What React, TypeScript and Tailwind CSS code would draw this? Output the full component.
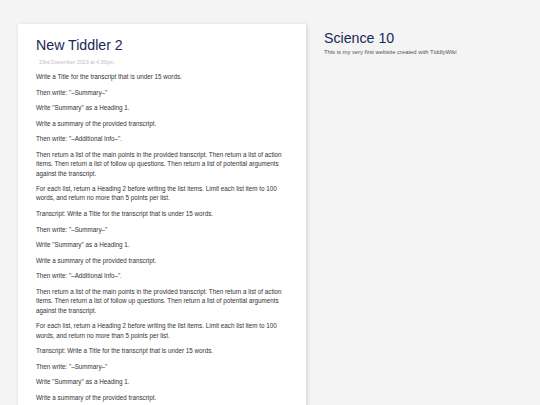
const paras: string[] = [
  "Write a Title for the transcript that is under 15 words.",
  "Then write: \"–Summary–\"",
  "Write \"Summary\" as a Heading 1.",
  "Write a summary of the provided transcript.",
  "Then write: \"–Additional Info–\".",
  "Then return a list of the main points in the provided transcript. Then return a list of action items. Then return a list of follow up questions. Then return a list of potential arguments against the transcript.",
  "For each list, return a Heading 2 before writing the list items. Limit each list item to 100 words, and return no more than 5 points per list.",
];

const body = [
  ...paras,
  "Transcript: " + paras[0],
  ...paras.slice(1),
  "Transcript: " + paras[0],
  ...paras.slice(1, 4),
];

export default function App() {
  return (
    <div className="flex h-[405px] w-[540px] overflow-hidden bg-[#f4f4f4] font-['Liberation_Sans',Arial,sans-serif]">
      <div className="ml-[18px] mt-[24px] w-[288px] shrink-0 self-start bg-white px-[18px] pt-[12px] pb-[18px] shadow-[1px_1px_4px_rgba(0,0,0,0.15)]">
        <h2 className="text-[14.2px] leading-[18px] text-[#182955]">New Tiddler 2</h2>
        <div className="mt-[4px] pl-[3px] text-[5.3px] leading-[8px] text-[#c0c0c0]">23rd December 2023 at 4:30pm</div>
        <div className="mt-[6px] text-[6.3px] leading-[9.3px] text-[#333333]">
          {body.map((p, i) => (
            <p key={i} className="mb-[6.3px]">{p}</p>
          ))}
        </div>
      </div>
      <div className="ml-[18px] mt-[29px]">
        <h1 className="text-[14.2px] leading-[18px] text-[#182955]">Science 10</h1>
        <div className="mt-[1px] text-[5.85px] leading-[8px] text-[#555555]">This is my very first website created with TiddlyWiki</div>
      </div>
    </div>
  );
}
